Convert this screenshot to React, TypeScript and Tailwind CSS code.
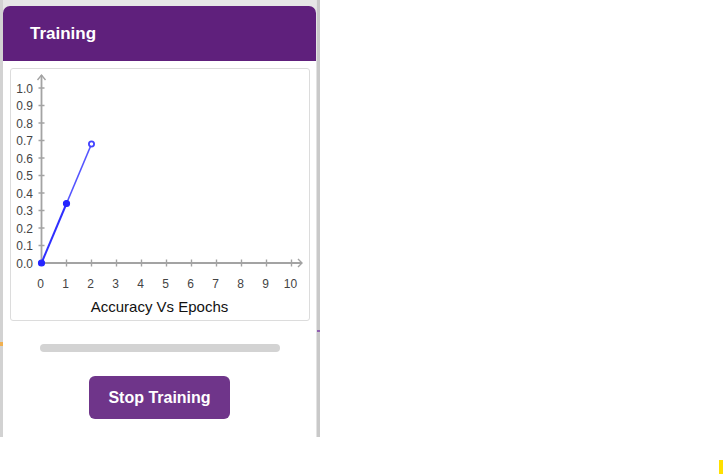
import React from "react";

const yTicks = [0, 1, 2, 3, 4, 5, 6, 7, 8, 9, 10];
const xTicks = [0, 1, 2, 3, 4, 5, 6, 7, 8, 9, 10];

function Chart() {
  const ox = 41.5;
  const oy = 263;
  const sx = 25;
  const sy = 17.5;
  const pts = [0, 0.34, 0.68].map((v, i) => [ox + i * sx, oy - v * 10 * sy]);
  return (
    <svg width="298" height="251" viewBox="11 69 298 251" className="block">
      <line x1={ox} y1={75} x2={ox} y2={oy} stroke="#a3a3a3" strokeWidth="1.8" />
      <polyline points={`${ox - 4},80 ${ox},75 ${ox + 4},80`} fill="none" stroke="#a3a3a3" strokeWidth="1.4" />
      <line x1={ox} y1={oy} x2={302} y2={oy} stroke="#a3a3a3" strokeWidth="1.8" />
      <polyline points={`298,259 302,263 298,267`} fill="none" stroke="#a3a3a3" strokeWidth="1.4" />
      {yTicks.slice(1).map((i) => (
        <line key={"yt" + i} x1={ox - 3} x2={ox + 3} y1={oy - i * sy} y2={oy - i * sy} stroke="#a3a3a3" strokeWidth="1.4" />
      ))}
      {xTicks.slice(1).map((i) => (
        <line key={"xt" + i} x1={ox + i * sx} x2={ox + i * sx} y1={oy - 3.5} y2={oy + 3.5} stroke="#a3a3a3" strokeWidth="1.4" />
      ))}
      {yTicks.map((i) => (
        <text
          key={"yl" + i}
          x={33}
          y={oy - i * sy + 4.5}
          textAnchor="end"
          fontSize="12"
          fill="#444"
          fontFamily="'Liberation Sans', Arial, sans-serif"
        >
          {(i / 10).toFixed(1)}
        </text>
      ))}
      {xTicks.map((i) => (
        <text
          key={"xl" + i}
          x={ox - 1 + i * sx}
          y={287.5}
          textAnchor="middle"
          fontSize="12"
          fill="#444"
          fontFamily="'Liberation Sans', Arial, sans-serif"
        >
          {i}
        </text>
      ))}
      <text
        x={159.5}
        y={312}
        textAnchor="middle"
        fontSize="15"
        fill="#111"
        fontFamily="'Liberation Sans', Arial, sans-serif"
      >
        Accuracy Vs Epochs
      </text>
      <line x1={pts[0][0]} y1={pts[0][1]} x2={pts[1][0]} y2={pts[1][1]} stroke="#2f2fff" strokeWidth="2" />
      <line x1={pts[1][0]} y1={pts[1][1]} x2={pts[2][0]} y2={pts[2][1]} stroke="#5555ff" strokeWidth="1.6" />
      <circle cx={pts[0][0]} cy={pts[0][1]} r="3" fill="#2626ff" stroke="#2626ff" strokeWidth="1.2" />
      <circle cx={pts[1][0]} cy={pts[1][1]} r="3" fill="#2626ff" stroke="#2626ff" strokeWidth="1.2" />
      <circle cx={pts[2][0]} cy={pts[2][1]} r="2.6" fill="#fff" stroke="#4444ff" strokeWidth="1.8" />
    </svg>
  );
}

export default function App() {
  return (
    <div className="relative w-[725px] h-[475px] bg-white overflow-hidden" style={{ fontFamily: "'Liberation Sans', Arial, sans-serif" }}>
      <div className="flex w-[320px] h-[437px] bg-[#e6e6e6]">
        <div className="w-[3px] h-full bg-[#d2d2d2]" />
        <div className="flex flex-col w-[313px] mt-[6px] bg-white rounded-t-[7px] overflow-hidden">
          <div className="h-[55px] bg-[#5f207c] flex items-center pl-[27px] pb-[1px]">
            <span className="text-white font-bold text-[17px] leading-none">Training</span>
          </div>
          <div className="mt-[7px] mx-auto w-[300px] h-[253px] border border-[#dcdcdc] rounded-[3px] bg-white">
            <Chart />
          </div>
          <div className="mt-[23px] mx-auto w-[240px] h-[8px] rounded-full bg-[#d3d3d3]" />
          <button className="mt-[24px] mx-auto w-[141px] h-[43px] rounded-[6px] bg-[#6f358a] text-white font-bold text-[16px]">
            Stop Training
          </button>
        </div>
        <div className="w-[1px] h-full bg-[#e3e3e3]" />
        <div className="w-[3px] h-full bg-[#c9c9c9]" />
      </div>
      <span className="absolute left-0 top-[342px] w-[3px] h-[4px] bg-[#f0b050]" />
      <span className="absolute left-[317px] top-[330px] w-[3px] h-[2px] bg-[#9060b0]" />
      <span className="absolute left-[719px] top-[460px] w-[4px] h-[14px] bg-[#ffe000]" />
    </div>
  );
}
